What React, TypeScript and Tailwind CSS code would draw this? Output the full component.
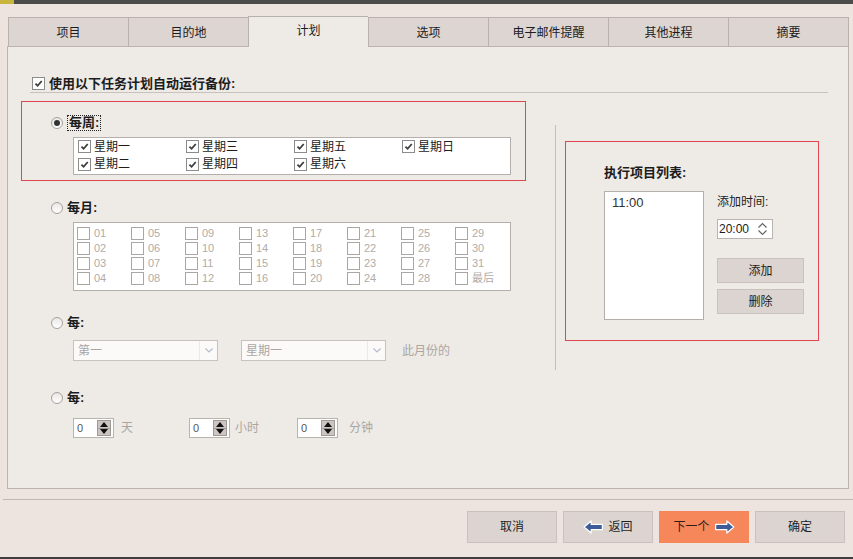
import React from 'react';

const tabs = ['项目', '目的地', '计划', '选项', '电子邮件提醒', '其他进程', '摘要'];
const weekDays = ['星期一', '星期三', '星期五', '星期日', '星期二', '星期四', '星期六'];
const monthDays = [
  '01', '05', '09', '13', '17', '21', '25', '29',
  '02', '06', '10', '14', '18', '22', '26', '30',
  '03', '07', '11', '15', '19', '23', '27', '31',
  '04', '08', '12', '16', '20', '24', '28', '最后',
];

function Check({ on, off }: { on?: boolean; off?: boolean }) {
  return (
    <span
      className={`w-[13px] h-[13px] border bg-white flex items-center justify-center shrink-0 ${
        off ? 'border-[#aaa6a3]' : 'border-[#8c8c8c]'
      }`}
    >
      {on && (
        <svg viewBox="0 0 10 10" className="w-[9px] h-[9px]">
          <path d="M1.6 5.2 L4 7.6 L8.6 2.2" fill="none" stroke="#3a3a3a" strokeWidth="1.9" />
        </svg>
      )}
    </span>
  );
}

function Radio({ on }: { on?: boolean }) {
  return (
    <span className="w-[12px] h-[12px] rounded-full border border-[#a3a09e] bg-gradient-to-b from-[#e9e7e6] to-white flex items-center justify-center shrink-0">
      {on && <span className="w-[6px] h-[6px] rounded-full bg-[#333]" />}
    </span>
  );
}

function Spin() {
  return (
    <div className="w-[41px] h-[20px] border border-[#bab4b0] bg-white flex items-center">
      <span className="ml-[3px] flex-1 text-[11px] leading-none text-[#555]">0</span>
      <span className="mr-[2px] w-[14px] h-[16px] bg-[#ccc5c2] border border-[#9f9996] flex flex-col">
        <span className="flex-1 flex items-center justify-center border-b border-[#9f9996]">
          <svg viewBox="0 0 8 5" className="w-[8px] h-[5px]">
            <path d="M0 5 L4 0 L8 5 Z" fill="#111" />
          </svg>
        </span>
        <span className="flex-1 flex items-center justify-center">
          <svg viewBox="0 0 8 5" className="w-[8px] h-[5px]">
            <path d="M0 0 L4 5 L8 0 Z" fill="#111" />
          </svg>
        </span>
      </span>
    </div>
  );
}

function Select({ text }: { text: string }) {
  return (
    <div className="w-[145px] h-[21px] border border-[#c7c2bf] bg-[#fbfaf9] flex items-center">
      <span className="flex-1 pl-[4px] text-[12px] text-[#aba6a3]">{text}</span>
      <span className="w-[18px] h-full border-l border-[#ebe8e6] flex items-center justify-center">
        <svg viewBox="0 0 8 5" className="w-[8px] h-[5px]">
          <path d="M0.5 0.5 L4 4 L7.5 0.5" fill="none" stroke="#b4bccb" strokeWidth="1.2" />
        </svg>
      </span>
    </div>
  );
}

function Arrow({ dir }: { dir: 'left' | 'right' }) {
  return (
    <svg viewBox="0 0 22 15" className={`w-[21px] h-[14px] ${dir === 'right' ? 'scale-x-[-1]' : ''}`}>
      <path
        d="M1 7.5 L8.5 1 L8.5 4.6 L20.5 4.6 L20.5 10.4 L8.5 10.4 L8.5 14 Z"
        fill="#3d5b97"
        stroke="#ffffff"
        strokeWidth="1.3"
        strokeLinejoin="round"
      />
    </svg>
  );
}

function Btn({ children, orange }: { children: React.ReactNode; orange?: boolean }) {
  return (
    <button
      className={`w-[90px] h-[32px] border flex items-center justify-center gap-[4px] text-[12px] ${
        orange
          ? 'bg-[#f5875b] border-[#f5875b] text-[#2e1e16]'
          : 'bg-[#dcd4d1] border-[#c9c1bd] text-[#1f1f1f]'
      }`}
    >
      {children}
    </button>
  );
}

export default function App() {
  return (
    <div className="w-[853px] h-[559px] bg-[#ede3df] flex flex-col overflow-hidden font-['Liberation_Sans','Noto_Sans_CJK_SC',sans-serif] text-[#1c1c1c]">
      {/* title bar edge */}
      <div className="h-[4px] bg-[#4b4b4b] flex">
        <div className="w-[14px] bg-[#c9b53c]" />
      </div>

      {/* Tabs */}
      <div className="flex items-end h-[31px] mt-[12px] pl-[8px]">
        {tabs.map((t, i) => {
          const active = i === 2;
          return (
            <div
              key={t}
              className={`w-[120px] flex items-center justify-center text-[12px] border-t border-l border-[#b8b1ad] ${
                i === tabs.length - 1 ? 'w-[121px] border-r' : ''
              } ${active ? 'h-[31px] bg-[#eeebe7] relative z-10 pb-[2px]' : 'h-[30px] bg-[#dcd5d2]'}`}
            >
              {t}
            </div>
          );
        })}
      </div>

      {/* Panel */}
      <div className="ml-[7px] w-[842px] h-[443px] -mt-px border border-[#bab3af] bg-[#eeebe7] flex flex-col">
        <div className="ml-[22px] mt-[28px] w-[798px] h-[18px] pl-[2px] flex items-center gap-[4px] border-b border-[#c8c1bd]">
          <Check on />
          <span className="text-[13px] font-bold leading-none">使用以下任务计划自动运行备份:</span>
        </div>

        <div className="flex">
          {/* Left column */}
          <div className="w-[547px] flex flex-col">
            {/* Weekly */}
            <div className="ml-[13px] mt-[8px] w-[505px] h-[80px] border border-[#e0464f] flex flex-col">
              <div className="ml-[29px] mt-[13px] h-[16px] flex items-center gap-[4px]">
                <Radio on />
                <span className="text-[13px] font-bold leading-[14px] border border-dotted border-[#222] px-[1px]">每周:</span>
              </div>
              <div className="ml-[51px] mt-[6px] w-[438px] h-[38px] border border-[#b5afac] bg-white pt-[1px] pl-[4px] grid grid-cols-[108px_108px_108px_108px]">
                {weekDays.map((d) => (
                  <div key={d} className="h-[15px] flex items-center gap-[3px] text-[12px]">
                    <Check on />
                    <span>{d}</span>
                  </div>
                ))}
              </div>
            </div>

            {/* Monthly */}
            <div className="ml-[43px] mt-[19px] h-[16px] flex items-center gap-[4px]">
              <Radio />
              <span className="text-[13px] font-bold">每月:</span>
            </div>
            <div className="ml-[65px] mt-[6px] w-[438px] h-[69px] border border-[#b5afac] bg-white pt-[3px] pl-[3px] grid grid-cols-[54px_54px_54px_54px_54px_54px_54px_54px] content-start">
              {monthDays.map((d) => (
                <div key={d} className="h-[15px] flex items-center gap-[4px] text-[11px] text-[#b0aca9]">
                  <Check off />
                  <span>{d}</span>
                </div>
              ))}
            </div>

            {/* Every nth weekday */}
            <div className="ml-[43px] mt-[24px] h-[16px] flex items-center gap-[4px]">
              <Radio />
              <span className="text-[13px] font-bold">每:</span>
            </div>
            <div className="ml-[65px] mt-[9px] flex items-center">
              <Select text="第一" />
              <div className="ml-[23px]">
                <Select text="星期一" />
              </div>
              <span className="ml-[16px] text-[12px] text-[#aba6a3]">此月份的</span>
            </div>

            {/* Every interval */}
            <div className="ml-[43px] mt-[29px] h-[16px] flex items-center gap-[4px]">
              <Radio />
              <span className="text-[13px] font-bold">每:</span>
            </div>
            <div className="ml-[65px] mt-[12px] flex items-center text-[12px] text-[#aba6a3]">
              <div className="w-[116px] flex items-center gap-[7px]">
                <Spin />
                <span>天</span>
              </div>
              <div className="w-[108px] flex items-center gap-[5px]">
                <Spin />
                <span>小时</span>
              </div>
              <div className="flex items-center gap-[11px]">
                <Spin />
                <span>分钟</span>
              </div>
            </div>
          </div>

          {/* Separator */}
          <div className="mt-[32px] w-px h-[245px] bg-[#c4bdb9]" />

          {/* Right column */}
          <div className="ml-[9px] mt-[48px] w-[254px] h-[200px] border border-[#e0464f] flex flex-col">
            <span className="ml-[38px] mt-[23px] text-[13px] font-bold leading-[16px]">执行项目列表:</span>
            <div className="ml-[38px] mt-[10px] flex">
              <div className="w-[100px] h-[129px] border border-[#b5afac] bg-white pl-[7px] pt-[3px] text-[13px] leading-[16px] text-[#333]">
                11:00
              </div>
              <div className="ml-[13px] flex flex-col">
                <span className="mt-[3px] text-[12px] leading-[16px]">添加时间:</span>
                <div className="mt-[9px] w-[56px] h-[20px] border border-[#bab4b0] bg-white flex items-center">
                  <span className="ml-[1px] flex-1 text-[12px] leading-none">20:00</span>
                  <svg viewBox="0 0 11 14" className="mr-[4px] w-[11px] h-[14px]">
                    <path d="M1.5 5.5 L5.5 1.5 L9.5 5.5 M1.5 8.5 L5.5 12.5 L9.5 8.5" fill="none" stroke="#666" strokeWidth="1.2" />
                  </svg>
                </div>
                <button className="mt-[19px] w-[87px] h-[25px] border border-[#c9c1bd] bg-[#dcd4d1] text-[12px]">添加</button>
                <button className="mt-[6px] w-[87px] h-[25px] border border-[#c9c1bd] bg-[#dcd4d1] text-[12px]">删除</button>
              </div>
            </div>
          </div>
        </div>
      </div>

      {/* Bottom separator */}
      <div className="mt-[10px] ml-[3px] h-px bg-[#bfb8b4]" />

      {/* Buttons */}
      <div className="mt-[11px] flex justify-end gap-[6px] pr-[8px]">
        <Btn>取消</Btn>
        <Btn>
          <Arrow dir="left" />
          <span>返回</span>
        </Btn>
        <Btn orange>
          <span>下一个</span>
          <Arrow dir="right" />
        </Btn>
        <Btn>确定</Btn>
      </div>

      <div className="flex-1" />
      <div className="h-[2px] bg-[#3d3d3d]" />
    </div>
  );
}
